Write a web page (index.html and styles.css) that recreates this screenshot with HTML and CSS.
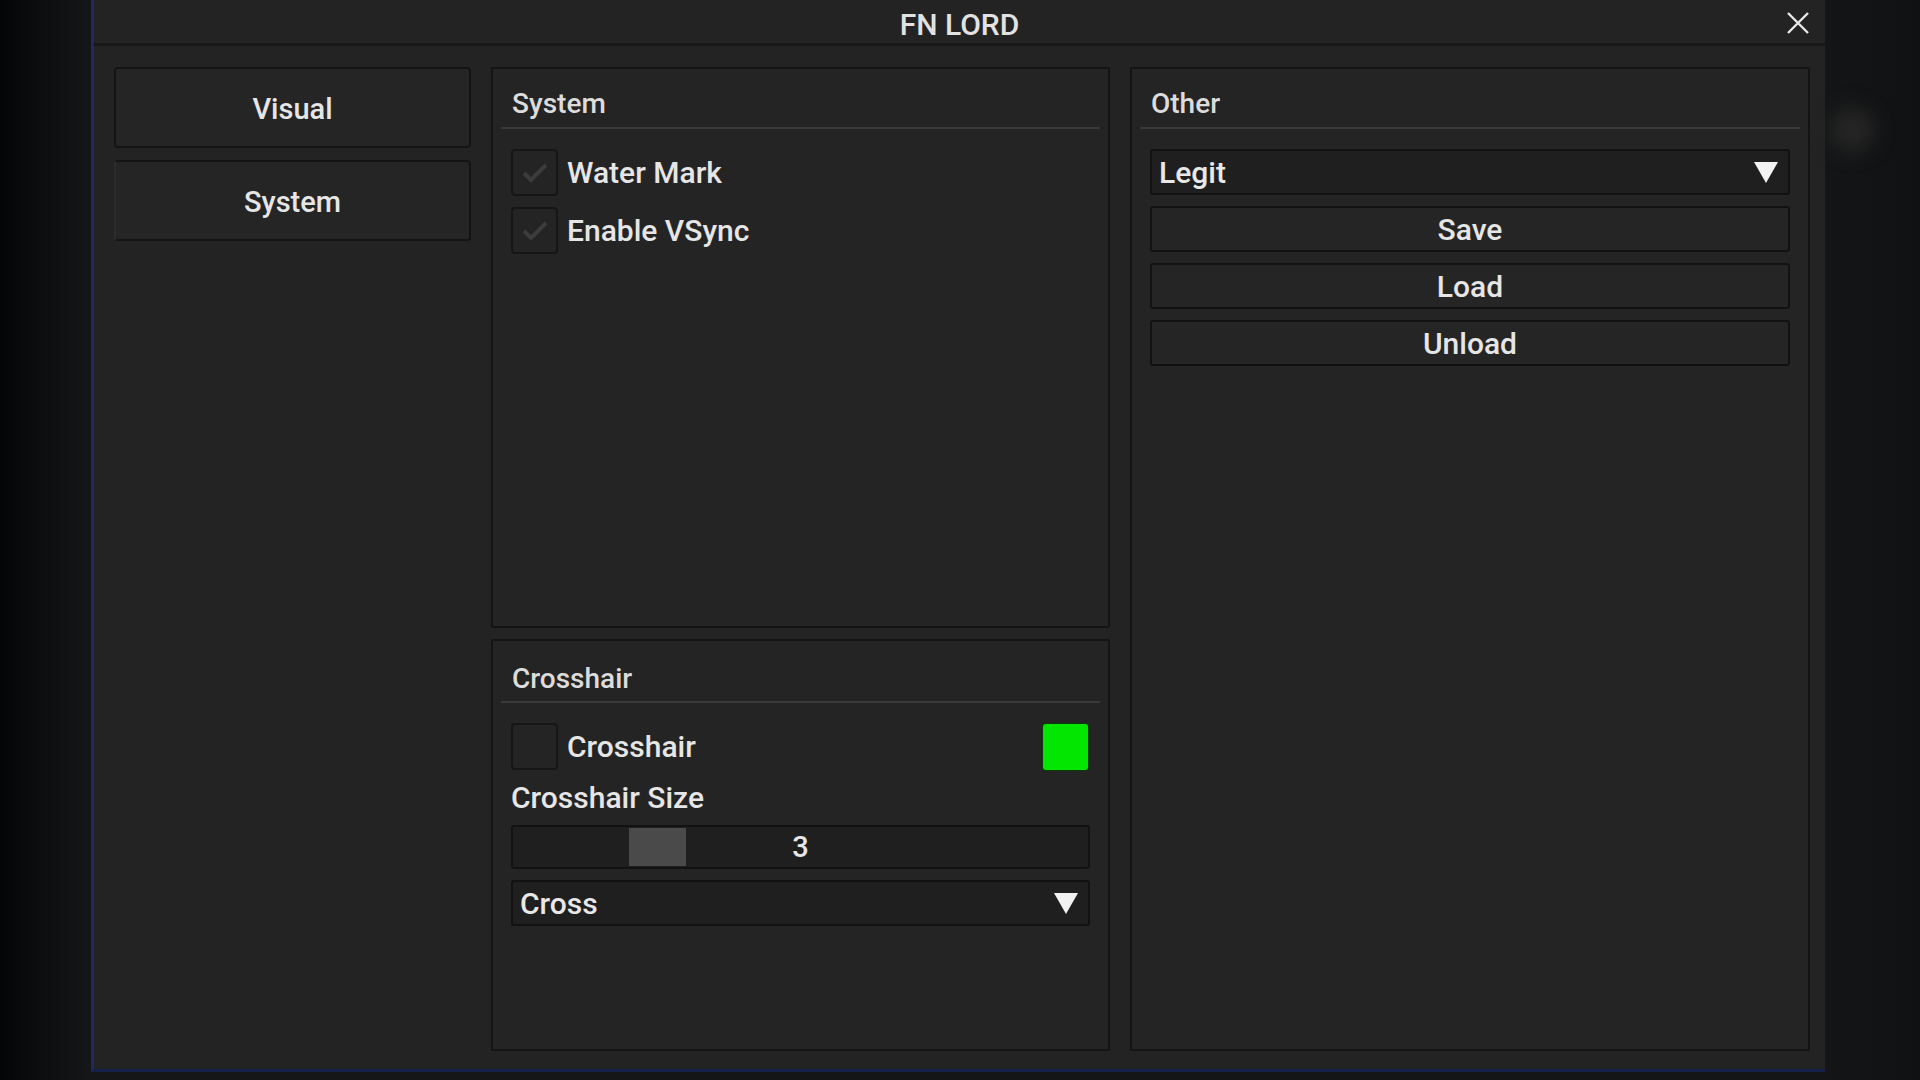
FILE: index.html
```html
<!DOCTYPE html>
<html lang="en">
  <head>
    <meta charset="UTF-8" />
    <title>FN LORD</title>
    <link rel="stylesheet" href="styles.css">
  </head>
  <body>
    <div class="window">
      <div class="titlebar">
        <span></span>
        <span class="title">FN LORD</span>
        <span class="close">
          <svg width="24" height="24" viewBox="0 0 24 24">
            <path d="M2 2 L22 22 M22 2 L2 22" stroke="#e8e8e8" stroke-width="2.4" fill="none" />
          </svg>
        </span>
      </div>

      <div class="content">
        <div class="tabs">
          <div class="tab">Visual</div>
          <div class="tab active">System</div>
        </div>

        <div class="middle">
          <div class="panel panel-system">
            <div class="panel-head">System</div>
            <div class="panel-body">
              <div class="check-row">
                <span class="checkbox">
                  <svg width="30" height="26" viewBox="0 0 30 26">
                    <path d="M4 13 L11 20 L26 5" stroke="#3c3c3c" stroke-width="4" fill="none" />
                  </svg>
                </span>
                <span class="label">Water Mark</span>
              </div>
              <div class="check-row">
                <span class="checkbox">
                  <svg width="30" height="26" viewBox="0 0 30 26">
                    <path d="M4 13 L11 20 L26 5" stroke="#3c3c3c" stroke-width="4" fill="none" />
                  </svg>
                </span>
                <span class="label">Enable VSync</span>
              </div>
            </div>
          </div>

          <div class="panel panel-cross">
            <div class="panel-head">Crosshair</div>
            <div class="panel-body">
              <div class="check-row">
                <span class="checkbox"></span>
                <span class="label">Crosshair</span>
                <span class="swatch"></span>
              </div>
              <div class="label size-label">Crosshair Size</div>
              <div class="slider">
                <span class="grab"></span>
                <span class="slider-value">3</span>
              </div>
              <div class="combo">
                <span>Cross</span>
                <span class="arrow"></span>
              </div>
            </div>
          </div>
        </div>

        <div class="panel panel-other">
          <div class="panel-head">Other</div>
          <div class="panel-body">
            <div class="combo">
              <span>Legit</span>
              <span class="arrow"></span>
            </div>
            <div class="btn">Save</div>
            <div class="btn">Load</div>
            <div class="btn">Unload</div>
          </div>
        </div>
      </div>
    </div>
    <div class="glow"></div>
  </body>
</html>
```

FILE: styles.css
```css
html, body {
  margin: 0;
  height: 100%;
}
body {
  width: 1920px;
  height: 1080px;
  overflow: hidden;
  position: relative;
  font-family: Roboto, "Liberation Sans", sans-serif;
  font-weight: 500;
  color: #e4e4e4;
  background: linear-gradient(90deg, #040506 0, #0e0f11 50px, #151617 90px, #141516 1830px, #101112 1920px);
}
.window {
  margin-left: 91px;
  width: 1734px;
  height: 1072px;
  background: #232323;
  border-left: 3px solid #1a2b5c;
  border-bottom: 3px solid #15204a;
  box-sizing: border-box;
  display: flex;
  flex-direction: column;
}
.titlebar {
  height: 46px;
  box-sizing: border-box;
  border-bottom: 3px solid #171717;
  display: grid;
  grid-template-columns: 1fr auto 1fr;
  align-items: center;
}
.title {
  font-size: 30px;
  color: #e2e2e2;
  padding-top: 5px;
}
.close {
  justify-self: end;
  margin-right: 15px;
  height: 24px;
  padding-top: 2px;
}
.content {
  flex: 1;
  display: grid;
  grid-template-columns: 357px 619px 680px;
  column-gap: 20px;
  padding: 21px 15px 18px 20px;
}
.tabs {
  display: flex;
  flex-direction: column;
  gap: 12px;
}
.tab {
  height: 81px;
  box-sizing: border-box;
  background: #252525;
  border: 2px solid #141414;
  border-radius: 4px;
  display: flex;
  align-items: center;
  justify-content: center;
  padding-top: 2px;
  font-size: 29px;
  color: #e6e6e6;
}
.tab.active {
  border-left-color: #2c2c2c;
}
.middle {
  display: flex;
  flex-direction: column;
  gap: 11px;
}
.panel {
  background: #242424;
  border: 2px solid #141414;
  border-radius: 2px;
  padding: 0 8px;
}
.panel-system {
  height: 561px;
  box-sizing: border-box;
}
.panel-cross {
  flex: 1;
}
.panel-head {
  height: 60px;
  box-sizing: border-box;
  padding: 11px 0 0 11px;
  display: flex;
  align-items: center;
  border-bottom: 2px solid #3a3a3a;
  font-size: 28px;
  color: #dcdcdc;
}
.panel-cross .panel-head {
  height: 62px;
  padding-top: 14px;
}
.panel-body {
  padding: 20px 10px 0 10px;
  display: flex;
  flex-direction: column;
  gap: 11px;
}
.panel-cross .panel-body {
  padding-top: 20px;
}
.check-row {
  height: 47px;
  display: flex;
  align-items: center;
  gap: 9px;
}
.checkbox {
  width: 47px;
  height: 47px;
  box-sizing: border-box;
  background: #242424;
  border: 2px solid #161616;
  border-radius: 4px;
  display: flex;
  align-items: center;
  justify-content: center;
}
.label {
  font-size: 30px;
  color: #e6e6e6;
}
.size-label {
  height: 33px;
  line-height: 33px;
}
.swatch {
  margin-left: auto;
  margin-right: 2px;
  width: 45px;
  height: 46px;
  border-radius: 3px;
  background: #03e602;
  box-shadow: 0 0 0 1px #0b3a0b;
}
.slider {
  height: 44px;
  box-sizing: border-box;
  background: #1f1f1f;
  border: 2px solid #121212;
  border-radius: 3px;
  display: flex;
  align-items: center;
  justify-content: center;
  position: relative;
}
.grab {
  position: absolute;
  left: 116px;
  top: 1px;
  width: 57px;
  height: 38px;
  background: #4a4a4a;
}
.slider-value {
  font-size: 29px;
  color: #e6e6e6;
}
.combo {
  height: 46px;
  box-sizing: border-box;
  background: #1f1f1f;
  border: 2px solid #121212;
  border-radius: 3px;
  display: flex;
  align-items: center;
  justify-content: space-between;
  padding: 0 10px 0 7px;
  font-size: 30px;
  color: #e8e8e8;
}
.arrow {
  width: 0;
  height: 0;
  border-left: 12px solid transparent;
  border-right: 12px solid transparent;
  border-top: 21px solid #f2f2f2;
}
.btn {
  height: 46px;
  box-sizing: border-box;
  background: #252525;
  border: 2px solid #121212;
  border-radius: 3px;
  display: flex;
  align-items: center;
  justify-content: center;
  font-size: 30px;
  color: #e6e6e6;
}
.glow {
  position: absolute;
  left: 1830px;
  top: 108px;
  width: 44px;
  height: 44px;
  border-radius: 50%;
  background: #262626;
  filter: blur(10px);
}
```
